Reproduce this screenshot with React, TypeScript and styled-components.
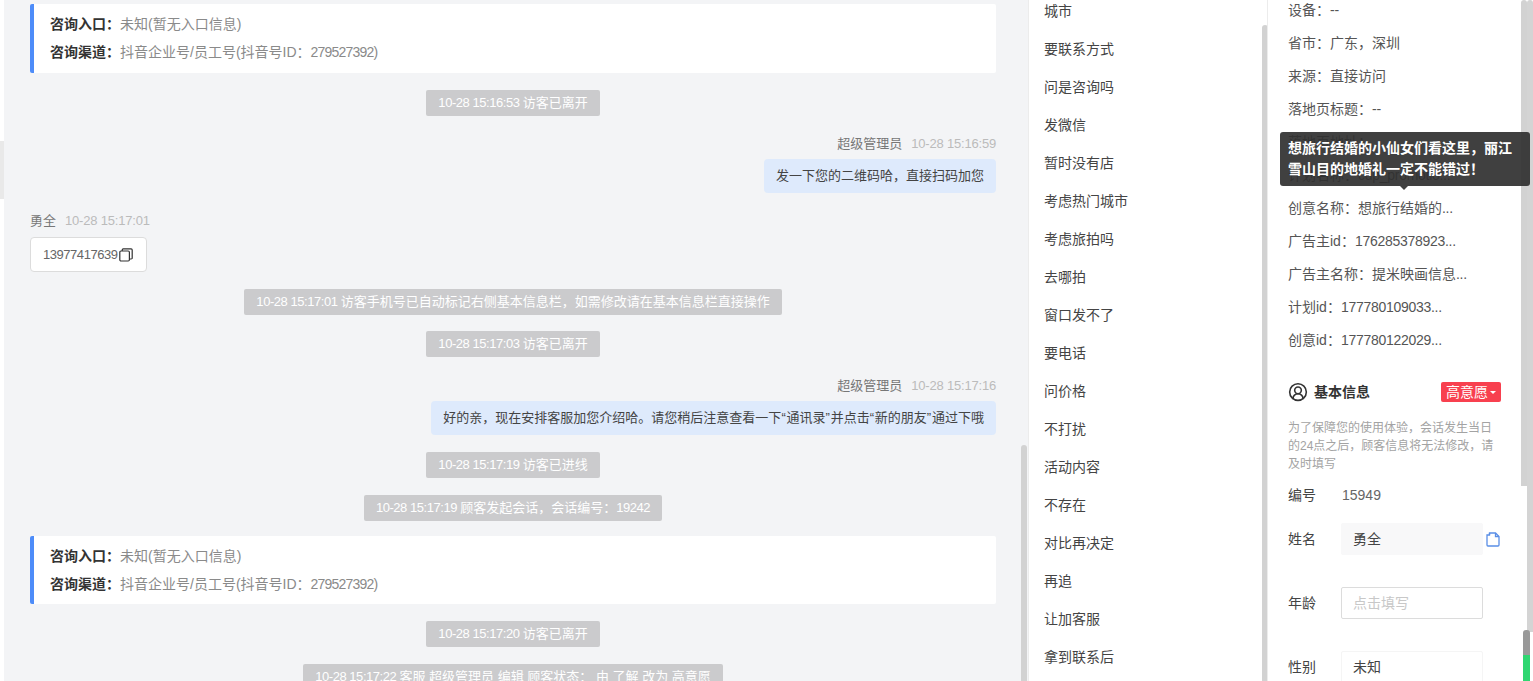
import styled, { createGlobalStyle } from 'styled-components'
import { CircleUserRound } from 'lucide-react'

const GlobalStyle = createGlobalStyle`
  html, body {
    margin: 0;
    padding: 0;
    height: 100%;
    overflow: hidden;
    background: #fff;
    font-family: 'Liberation Sans', 'Noto Sans CJK SC', sans-serif;
  }
  * {
    box-sizing: border-box;
  }
`

const phrases = [
  '城市',
  '要联系方式',
  '问是咨询吗',
  '发微信',
  '暂时没有店',
  '考虑热门城市',
  '考虑旅拍吗',
  '去哪拍',
  '窗口发不了',
  '要电话',
  '问价格',
  '不打扰',
  '活动内容',
  '不存在',
  '对比再决定',
  '再追',
  '让加客服',
  '拿到联系后',
]

const visitRows = [
  ['设备：', '--'],
  ['省市：广东，深圳', ''],
  ['来源：直接访问', ''],
  ['落地页标题：', '--'],
  ['落地页地址：', ''],
  ['计划名称：', 'cdp_promotio...'],
  ['创意名称：想旅行结婚的', '...'],
  ['广告主id：', '176285378923...'],
  ['广告主名称：提米映画信息', '...'],
  ['计划id：', '177780109033...'],
  ['创意id：', '177780122029...'],
]

const EntryCard = () => (
  <Card>
    <CardLine>
      <b>咨询入口：</b>
      <span>未知(暂无入口信息)</span>
    </CardLine>
    <CardLine>
      <b>咨询渠道：</b>
      <span>
        抖音企业号/员工号(抖音号ID：<Lat>279527392)</Lat>
      </span>
    </CardLine>
  </Card>
)

const App = () => {
  return (
    <Page>
      <GlobalStyle />
      <LeftEdge>
        <Thumb $top={141} $bottom={482} $width={4} $left={0} $color='#e9e9e9' />
      </LeftEdge>
      <Chat>
        <EntryCard />
        <Notice>
          <Lat>10-28 15:16:53 </Lat>访客已离开
        </Notice>
        <AgentMeta $gap={18}>
          超级管理员<time>10-28 15:16:59</time>
        </AgentMeta>
        <Bubble>发一下您的二维码哈，直接扫码加您</Bubble>
        <CustomerMeta $gap={18}>
          勇全<time>10-28 15:17:01</time>
        </CustomerMeta>
        <PhoneBox>
          <Lat>13977417639</Lat>
          <svg viewBox='0 0 14 14' width='14' height='14' fill='none' stroke='#333' strokeWidth='1.2'>
            <rect x='0.8' y='3' width='9.6' height='10' rx='1.2' />
            <path d='M3.2 3V1.9A1.1 1.1 0 0 1 4.3.8h7.8a1.1 1.1 0 0 1 1.1 1.1v8a1.1 1.1 0 0 1-1.1 1.1h-1.7' />
          </svg>
        </PhoneBox>
        <Notice>
          <Lat>10-28 15:17:01 </Lat>访客手机号已自动标记右侧基本信息栏，如需修改请在基本信息栏直接操作
        </Notice>
        <Notice $gap={16}>
          <Lat>10-28 15:17:03 </Lat>访客已离开
        </Notice>
        <AgentMeta $gap={19}>
          超级管理员<time>10-28 15:17:16</time>
        </AgentMeta>
        <Bubble>
          好的亲，现在安排客服加您介绍哈。请您稍后注意查看一下<Quote>“</Quote>通讯录<Quote>”</Quote>并点击
          <Quote>“</Quote>新的朋友<Quote>”</Quote>通过下哦
        </Bubble>
        <Notice>
          <Lat>10-28 15:17:19 </Lat>访客已进线
        </Notice>
        <Notice>
          <Lat>10-28 15:17:19 </Lat>顾客发起会话，会话编号：<Lat>19242</Lat>
        </Notice>
        <CardGap>
          <EntryCard />
        </CardGap>
        <Notice>
          <Lat>10-28 15:17:20 </Lat>访客已离开
        </Notice>
        <Notice>
          <Lat>10-28 15:17:22 </Lat>客服 超级管理员 编辑 顾客状态： 由 了解 改为 高意愿
        </Notice>
        <Thumb $top={445} $bottom={0} $width={6} $left={1017} $color='#d2d2d2' />
      </Chat>
      <Phrases>
        <PhraseList>
          {phrases.map((phrase) => (
            <Phrase key={phrase}>{phrase}</Phrase>
          ))}
        </PhraseList>
        <Thumb $top={25} $bottom={0} $width={6} $left={233} $color='#d2d2d2' />
      </Phrases>
      <Info>
        <VisitList>
          {visitRows.map(([label, value]) => (
            <VisitRow key={label}>
              {label}
              <Lat>{value}</Lat>
            </VisitRow>
          ))}
        </VisitList>
        <Tooltip>想旅行结婚的小仙女们看这里，丽江雪山目的地婚礼一定不能错过！</Tooltip>
        <SectionHead>
          <SectionTitle>
            <CircleUserRound size={20} strokeWidth={1.9} />
            基本信息
          </SectionTitle>
          <IntentTag>高意愿</IntentTag>
        </SectionHead>
        <Hint>为了保障您的使用体验，会话发生当日的24点之后，顾客信息将无法修改，请及时填写</Hint>
        <IdRow>
          <FieldLabel>编号</FieldLabel>
          <IdValue>15949</IdValue>
        </IdRow>
        <FieldRow $gap={18}>
          <FieldLabel>姓名</FieldLabel>
          <Field $kind='filled'>勇全</Field>
          <DocIcon viewBox='0 0 14 15' width='14' height='15' fill='none' stroke='#5a8ee6' strokeWidth='1.3'>
            <path d='M3.5 1h6l3.5 3.5V13a1 1 0 0 1-1 1H2a1 1 0 0 1-1-1V3h2.5z' />
            <path d='M3.5 1v2M9.5 1v3.5H13' />
          </DocIcon>
        </FieldRow>
        <FieldRow $gap={32}>
          <FieldLabel>年龄</FieldLabel>
          <Field $kind='input'>点击填写</Field>
        </FieldRow>
        <FieldRow $gap={32}>
          <FieldLabel>性别</FieldLabel>
          <Field $kind='plain'>未知</Field>
        </FieldRow>
        <Thumb $top={0} $bottom={195} $width={6} $left={253} $color='#d2d2d2' />
      </Info>
      <Thumb $top={0} $bottom={49} $width={6} $left={1527} $color='#d4d4d4' />
      <MiniThumb />
    </Page>
  )
}

const Page = styled.div`
  position: relative;
  display: flex;
  width: 1533px;
  height: 681px;
  overflow: hidden;
  background: #fff;
`

const Lat = styled.span`
  letter-spacing: -0.035em;
`

const Quote = styled.span`
  letter-spacing: 0.8px;
`

const Thumb = styled.div<{ $top: number; $bottom: number; $left: number; $width: number; $color: string }>`
  position: absolute;
  top: ${(p) => p.$top}px;
  bottom: ${(p) => p.$bottom}px;
  left: ${(p) => p.$left}px;
  width: ${(p) => p.$width}px;
  background: ${(p) => p.$color};
  border-radius: 3px 3px 0 0;
`

const LeftEdge = styled.div`
  position: relative;
  flex: 0 0 4px;
  background: #fff;
  ${Thumb} {
    border-radius: 0;
  }
`

const Chat = styled.div`
  position: relative;
  flex: 0 0 1024px;
  display: flex;
  flex-direction: column;
  padding: 4px 32px 0 26px;
  background: #f3f4f6;
  overflow: hidden;
`

const Card = styled.div`
  flex: none;
  display: flex;
  flex-direction: column;
  justify-content: center;
  gap: 7px;
  height: 69px;
  padding: 0 0 1px 16px;
  background: #fff;
  border-left: 4px solid #4d8cf9;
  border-radius: 2px;
`

const CardGap = styled.div`
  flex: none;
  margin-top: 15px;
  ${Card} {
    height: 68px;
    padding-bottom: 0;
  }
`

const CardLine = styled.div`
  font-size: 14px;
  line-height: 21px;
  b {
    color: #333;
    font-weight: 700;
  }
  span {
    color: #8a8a8a;
  }
  ${Lat} {
    letter-spacing: -0.8px;
  }
`

const Notice = styled.div<{ $gap?: number }>`
  flex: none;
  align-self: center;
  height: 26px;
  margin-top: ${(p) => p.$gap ?? 17}px;
  padding: 0 12px;
  background: #cbcbcd;
  border-radius: 2px;
  color: #fff;
  font-size: 13px;
  line-height: 26px;
  white-space: pre;
`

const AgentMeta = styled.div<{ $gap: number }>`
  flex: none;
  display: flex;
  justify-content: flex-end;
  gap: 9px;
  height: 18px;
  margin-top: ${(p) => p.$gap}px;
  color: #777;
  font-size: 13px;
  line-height: 20px;
  time {
    color: #bbb;
    letter-spacing: -0.015em;
  }
`

const Bubble = styled.div`
  flex: none;
  align-self: flex-end;
  height: 34px;
  margin-top: 7px;
  padding: 0 12px;
  background: #deeafc;
  border-radius: 4px;
  color: #444;
  font-size: 13px;
  line-height: 34px;
  white-space: nowrap;
`

const CustomerMeta = styled(AgentMeta)`
  justify-content: flex-start;
`

const PhoneBox = styled.div`
  flex: none;
  align-self: flex-start;
  display: flex;
  align-items: center;
  gap: 1px;
  height: 35px;
  margin-top: 8px;
  padding: 0 13px 0 12px;
  background: #fff;
  border: 1px solid #dcdcdc;
  border-radius: 4px;
  color: #666;
  font-size: 13px;
`

const Phrases = styled.div`
  position: relative;
  flex: 0 0 240px;
  overflow: hidden;
  border-left: 1px solid #ececec;
  border-right: 1px solid #ececec;
`

const PhraseList = styled.ul`
  margin: -8px 0 0;
  padding: 0 0 0 15px;
  list-style: none;
`

const Phrase = styled.li`
  height: 38px;
  color: #444;
  font-size: 14px;
  line-height: 38px;
`

const Info = styled.div`
  position: relative;
  flex: 0 0 261px;
  padding: 0 0 0 20px;
  overflow: visible;
`

const VisitList = styled.div`
  margin-top: -6px;
`

const VisitRow = styled.div`
  height: 33px;
  color: #555;
  font-size: 14px;
  line-height: 33px;
  white-space: nowrap;
  ${Lat} {
    letter-spacing: -0.02em;
  }
`

const Tooltip = styled.div`
  position: absolute;
  z-index: 2;
  top: 132px;
  left: 12px;
  width: 250px;
  height: 54px;
  padding: 6px 8px;
  background: rgba(48, 48, 48, 0.92);
  border-radius: 3px;
  color: #fff;
  font-size: 14px;
  font-weight: 700;
  line-height: 21px;
  &::after {
    content: '';
    position: absolute;
    top: 100%;
    left: 120px;
    border: 4px solid transparent;
    border-top-color: rgba(48, 48, 48, 0.92);
  }
`

const SectionHead = styled.div`
  display: flex;
  align-items: center;
  justify-content: space-between;
  width: 213px;
  height: 20px;
  margin-top: 25px;
`

const SectionTitle = styled.div`
  display: flex;
  align-items: center;
  gap: 6px;
  color: #333;
  font-size: 14px;
  font-weight: 700;
  line-height: 20px;
`

const IntentTag = styled.div`
  display: flex;
  align-items: center;
  gap: 2px;
  width: 60px;
  height: 20px;
  padding-left: 5px;
  background: #f8404f;
  border-radius: 2px;
  color: #fff;
  font-size: 14px;
  line-height: 20px;
  &::after {
    content: '';
    margin-top: 1px;
    border: 3.5px solid transparent;
    border-top-color: #fff;
    border-bottom-width: 0;
  }
`

const Hint = styled.p`
  width: 214px;
  margin: 17px 0 0;
  color: #a3a3a3;
  font-size: 12px;
  line-height: 18px;
`

const IdRow = styled.div`
  display: flex;
  align-items: center;
  height: 20px;
  margin-top: 12px;
`

const FieldRow = styled.div<{ $gap: number }>`
  display: flex;
  align-items: center;
  height: 32px;
  margin-top: ${(p) => p.$gap}px;
`

const FieldLabel = styled.span`
  flex: 0 0 53px;
  margin-top: -2px;
  color: #444;
  font-size: 14px;
`

const IdValue = styled.span`
  margin-left: 1px;
  color: #666;
  font-size: 14px;
`

const Field = styled.div<{ $kind: 'filled' | 'input' | 'plain' }>`
  flex: 0 0 142px;
  height: 32px;
  padding: 0 11px;
  background: ${(p) => (p.$kind === 'filled' ? '#f8f8f9' : '#fff')};
  border: 1px solid ${(p) => (p.$kind === 'input' ? '#dcdcdc' : p.$kind === 'plain' ? '#f5f5f5' : '#f8f8f9')};
  border-radius: 2px;
  color: ${(p) => (p.$kind === 'input' ? '#c8c8c8' : '#444')};
  font-size: 14px;
  line-height: 30px;
`

const DocIcon = styled.svg`
  flex: none;
  margin-left: 3px;
`

const MiniThumb = styled.div`
  position: absolute;
  top: 630px;
  right: 3px;
  bottom: 0;
  width: 7px;
  background: linear-gradient(#999 0, #999 25px, #2fd671 25px);
  border-radius: 3px 3px 0 0;
`

export default App
